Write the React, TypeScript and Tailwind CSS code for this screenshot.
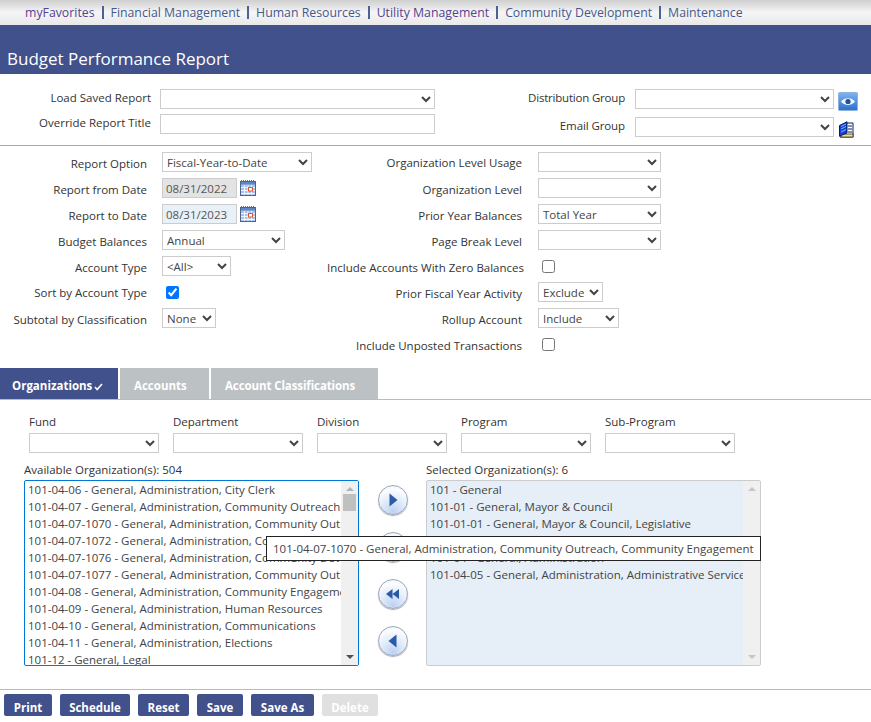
import React from "react";

const ink = "text-[#333]";

function Sel({ w, value = "" }: { w: string; value?: string }) {
  return (
    <select defaultValue={value} className={`${w} h-5 border border-[#ccc] bg-white text-[11.5px] text-[#444] outline-none`}>
      <option value={value}>{value}</option>
    </select>
  );
}

function Cal() {
  return (
    <svg width="16" height="16" viewBox="0 0 16 16" className="ml-[3px] shrink-0">
      <rect x="0.5" y="1.5" width="15" height="14" fill="#a9c2ea" stroke="#4a6391" />
      <path d="M1 0.5h14" stroke="#777" strokeDasharray="1 1" />
      <rect x="1" y="2" width="14" height="2.5" fill="#5f86c4" />
      <path d="M1 7.5h14M1 10.5h14M1 13.5h14M4.5 5v10M8 5v10M11.5 5v10" stroke="#eef3fc" strokeWidth="1" />
      <rect x="8.5" y="7.5" width="4" height="3.5" fill="#fff" stroke="#e0552b" />
    </svg>
  );
}

function Label({ children, pad = "pt-[2px]" }: { children: React.ReactNode; pad?: string }) {
  return <span className={`whitespace-nowrap ${pad} text-right ${ink}`}>{children}</span>;
}

function RoundBtn({ d, label }: { d: string; label: string }) {
  return (
    <button aria-label={label} className="flex h-[30px] w-[30px] items-center justify-center rounded-full border border-[#9aa8ba] bg-[radial-gradient(circle_at_50%_90%,#bcd2f2_0%,#e4edf9_45%,#fbfcfe_75%,#eef1f6_100%)] shadow-[0_1px_1px_#aab]">
      <svg width="16" height="16" viewBox="0 0 16 16"><path d={d} fill="#2a5aa8" /></svg>
    </button>
  );
}

const avail = [
  "101-04-06 - General, Administration, City Clerk",
  "101-04-07 - General, Administration, Community Outreach",
  "101-04-07-1070 - General, Administration, Community Outreach, Community Engagement",
  "101-04-07-1072 - General, Administration, Community Development",
  "101-04-07-1076 - General, Administration, Community Development",
  "101-04-07-1077 - General, Administration, Community Outreach",
  "101-04-08 - General, Administration, Community Engagement",
  "101-04-09 - General, Administration, Human Resources",
  "101-04-10 - General, Administration, Communications",
  "101-04-11 - General, Administration, Elections",
  "101-12 - General, Legal",
];

const sel = [
  "101 - General",
  "101-01 - General, Mayor & Council",
  "101-01-01 - General, Mayor & Council, Legislative",
  "101-02 - General, City Manager",
  "101-04 - General, Administration",
  "101-04-05 - General, Administration, Administrative Service",
];

const navItems = ["myFavorites", "Financial Management", "Human Resources", "Utility Management", "Community Development", "Maintenance"];

function Scrollbar({ thumb, dim }: { thumb?: boolean; dim?: boolean }) {
  return (
    <div className="flex w-[17px] shrink-0 flex-col items-center justify-between bg-[#f0f0f0] py-[6px]">
      <div className="flex w-full flex-col items-center">
        <div className={`h-0 w-0 border-x-[4px] border-b-[4px] border-x-transparent ${dim ? "border-b-[#c4c4c4]" : "border-b-[#b4b4b4]"}`} />
        {thumb && <div className="mt-[3px] h-[17px] w-[13px] bg-[#c0c0c0]" />}
      </div>
      <div className={`h-0 w-0 border-x-[4px] border-t-[4px] border-x-transparent ${dim ? "border-t-[#c4c4c4]" : "border-t-[#505050]"}`} />
    </div>
  );
}

export default function App() {
  return (
    <div className={`relative h-[722px] w-[871px] overflow-hidden bg-white text-[11.5px] leading-[17px] ${ink} [font-family:'Open_Sans',sans-serif]`}>
      <nav className="flex h-[25px] items-center bg-gradient-to-b from-[#cfcfcf] via-[#f6f6f6] to-[#e8e8e8] pl-[25px] text-[12.3px] text-[#44598f]">
        {navItems.map((n, i) => (
          <React.Fragment key={n}>
            {i > 0 && <span className="mx-[7px] h-[13px] w-[2px] bg-[#4a6394]" />}
            <span className={i === 0 || i === 3 ? "text-[#55418f]" : ""}>{n}</span>
          </React.Fragment>
        ))}
      </nav>
      <header className="flex h-[49px] items-end bg-[#40518b] pb-[2px] pl-[7px] text-[17px] leading-[26px] text-white">Budget Performance Report</header>

      <section className="flex h-[72px] border-b border-[#aaa] pt-[15px]">
        <div className="grid w-[435px] grid-cols-[151px_275px] content-start items-start gap-x-[9px] gap-y-[5px]">
          <Label pad="pt-0">Load Saved Report</Label>
          <Sel w="w-[275px]" />
          <Label pad="pt-0">Override Report Title</Label>
          <input className="h-5 w-[275px] border border-[#ccc]" />
        </div>
        <div className="grid grid-cols-[190px_199px_24px] content-start items-start gap-x-[10px] gap-y-[6px]">
          <Label pad="pt-0 tracking-[-0.2px]">Distribution Group</Label>
          <Sel w="w-[199px]" />
          <svg width="20" height="19" viewBox="0 0 20 19" className="-ml-[6px] mt-[3px]">
            <defs>
              <linearGradient id="eyeBg" x1="0" y1="0" x2="0" y2="1">
                <stop offset="0" stopColor="#7fb4ee" />
                <stop offset="1" stopColor="#2a70cf" />
              </linearGradient>
            </defs>
            <rect x="0.5" y="0.5" width="19" height="18" rx="1" fill="url(#eyeBg)" stroke="#8fb2dc" />
            <path d="M3 9.5C6 5 14 5 17 9.5 14 14 6 14 3 9.5z" fill="#eef5fc" />
            <circle cx="10" cy="9.5" r="2.6" fill="#1f4f9e" />
          </svg>
          <Label pad="pt-0 tracking-[-0.1px]">Email Group</Label>
          <Sel w="w-[199px]" />
          <svg width="16" height="17" viewBox="0 0 16 17" className="-ml-[6px] mt-[4px]">
            <path d="M8 2h7v14H2v-1" fill="#fff" stroke="#0a1a66" />
            <rect x="3" y="13" width="12" height="3" fill="#f5e463" stroke="#0a1a66" strokeWidth="0.7" />
            <path d="M1.5 4.5 9 .8V12l-7.5 3z" fill="#1c3fd0" stroke="#0a1a66" />
            <path d="M3 5.5 8 3M3 8l5-2.5M3 11l5-2.5" stroke="#5fc8f5" />
            <path d="M10 5h4M10 8h4M10 11h4" stroke="#0a1a66" />
          </svg>
        </div>
      </section>

      <section className="flex h-[222px] pt-[6px]">
        <div className="grid w-[312px] grid-cols-[147px_1fr] auto-rows-[20px] items-center gap-x-[15px] gap-y-[6px]">
          <Label>Report Option</Label>
          <Sel w="w-[150px]" value="Fiscal-Year-to-Date" />
          <Label>Report from Date</Label>
          <div className="flex items-center">
            <input readOnly value="08/31/2022" className="h-5 w-[75px] border border-[#ccc] bg-[#e3e3e3] pl-[3px] text-[#555]" />
            <Cal />
          </div>
          <Label>Report to Date</Label>
          <div className="flex items-center">
            <input readOnly value="08/31/2023" className="h-5 w-[75px] border border-[#ccc] bg-[#e8f0f8] pl-[3px] text-[#555]" />
            <Cal />
          </div>
          <Label>Budget Balances</Label>
          <Sel w="w-[123px]" value="Annual" />
          <Label>Account Type</Label>
          <Sel w="w-[69px]" value="<All>" />
          <Label pad="pt-0">Sort by Account Type</Label>
          <input type="checkbox" defaultChecked className="ml-[4px] h-[13px] w-[13px]" />
          <Label>Subtotal by Classification</Label>
          <Sel w="w-[54px]" value="None" />
        </div>
        <div className="ml-[15px] grid w-[334px] grid-cols-[195px_1fr] auto-rows-[20px] items-center gap-x-[16px] gap-y-[6px]">
          <Label pad="pt-0">Organization Level Usage</Label>
          <Sel w="w-[123px]" />
          <Label>Organization Level</Label>
          <Sel w="w-[123px]" />
          <Label>Prior Year Balances</Label>
          <Sel w="w-[123px]" value="Total Year" />
          <Label>Page Break Level</Label>
          <Sel w="w-[123px]" />
          <Label>Include Accounts With Zero Balances</Label>
          <input type="checkbox" className="ml-[4px] h-[13px] w-[13px]" />
          <Label>Prior Fiscal Year Activity</Label>
          <Sel w="w-[65px]" value="Exclude" />
          <Label>Rollup Account</Label>
          <Sel w="w-[81px]" value="Include" />
          <Label>Include Unposted Transactions</Label>
          <input type="checkbox" className="ml-[4px] h-[13px] w-[13px]" />
        </div>
      </section>

      <div className="flex h-[32px] gap-[2px] border-b border-[#bbb] text-[11.5px] font-bold text-white">
        <div className="flex w-[118px] items-center bg-[#40518b] pl-[12px] pt-[3px]">
          Organizations
          <svg width="9" height="8" viewBox="0 0 9 8" className="ml-[2px] mt-[3px]"><path d="M1 4l2.2 2.5L8 1" fill="none" stroke="#fff" strokeWidth="1.6" /></svg>
        </div>
        <div className="flex w-[89px] items-center bg-[#bcc1c4] pl-[14px] pt-[3px]">Accounts</div>
        <div className="flex w-[167px] items-center bg-[#bcc1c4] pl-[14px] pt-[3px] tracking-[-0.1px]">Account Classifications</div>
      </div>

      <div className="flex gap-[14px] pl-[29px] pt-[13px]">
        {["Fund", "Department", "Division", "Program", "Sub-Program"].map((l) => (
          <div key={l} className="flex w-[130px] flex-col">
            <span className="h-[20px] leading-[17px]">{l}</span>
            <Sel w="w-[130px]" />
          </div>
        ))}
      </div>

      <div className="mt-[8px] flex pl-[24px]">
        <div className="w-[335px]">
          <div className="h-[19px]">Available Organization(s): 504</div>
          <div className="flex h-[186px] overflow-hidden rounded-[2px] border border-[#0078d7] text-[#444]">
            <ul className="min-w-0 flex-1 overflow-hidden pl-[3px]">
              {avail.map((a) => <li key={a} className="whitespace-nowrap">{a}</li>)}
            </ul>
            <Scrollbar thumb />
          </div>
        </div>
        <div className="flex w-[67px] flex-col items-center gap-[17px] pt-[24px]">
          <RoundBtn label="Add" d="M4.5 1.5 12.5 8 4.5 14.5z" />
          <RoundBtn label="Add all" d="M1.5 3 8 8 1.5 13zM8 3l6.5 5L8 13z" />
          <RoundBtn label="Remove all" d="M1 8 7.5 3v10zM7.5 8 14 3v10z" />
          <RoundBtn label="Remove" d="M11.5 1.5 3.5 8l8 6.5z" />
        </div>
        <div className="w-[335px]">
          <div className="h-[19px]">Selected Organization(s): 6</div>
          <div className="flex h-[186px] overflow-hidden rounded-[2px] border border-[#ccc] bg-[#e6eff7] text-[#444]">
            <ul className="min-w-0 flex-1 overflow-hidden pl-[3px]">
              {sel.map((a) => <li key={a} className="whitespace-nowrap">{a}</li>)}
            </ul>
            <Scrollbar dim />
          </div>
        </div>
      </div>

      <div className="absolute left-[266px] top-[536px] flex h-[25px] w-[495px] items-center whitespace-nowrap border border-[#222] bg-white pl-[6px] text-[#444]">
        101-04-07-1070 - General, Administration, Community Outreach, Community Engagement
      </div>

      <footer className="mt-[23px] flex gap-[8px] border-t border-[#bbb] pl-[4px] pt-[4px] text-[11.5px] font-bold text-white">
        {[["Print", "w-[48px]"], ["Schedule", "w-[70px]"], ["Reset", "w-[51px]"], ["Save", "w-[46px]"], ["Save As", "w-[63px]"]].map(([t, w]) => (
          <button key={t} className={`${w} h-[22px] rounded-[2px] bg-[#40518b] pt-[4px]`}>{t}</button>
        ))}
        <button className="h-[22px] w-[56px] rounded-[2px] bg-[#e0e0e0] pt-[4px]">Delete</button>
      </footer>
    </div>
  );
}
